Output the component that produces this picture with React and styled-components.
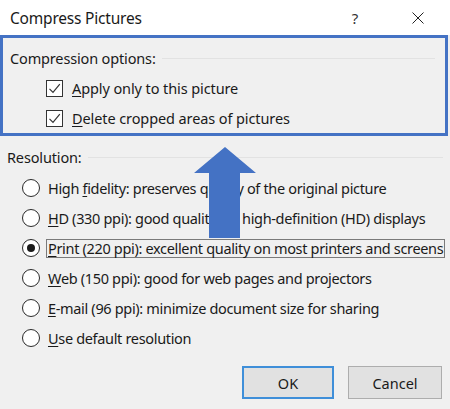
import React from 'react';
import styled, { createGlobalStyle } from 'styled-components';

const Global = createGlobalStyle`
  html, body { margin: 0; padding: 0; background: #f0f0f0; }
  body { font-family: "Noto Sans", "Open Sans", sans-serif; color: #1a1a1a; }
`;

const Dialog = styled.div`
  position: relative;
  width: 450px;
  height: 409px;
  background: #f0f0f0;
  overflow: hidden;
`;

const TitleBar = styled.div`
  height: 35px;
  background: #fff;
  display: flex;
  align-items: center;
  padding-left: 10px;
  font-size: 15.5px;
  letter-spacing: -0.2px;
`;

const Title = styled.div`
  flex: 1;
`;

const Help = styled.div`
  width: 14px;
  margin-right: 50px;
  text-align: center;
  font-size: 15px;
  color: #333;
`;

const Close = styled.svg`
  margin-right: 26px;
`;

const Frame = styled.div`
  width: 448px;
  height: 101px;
  box-sizing: border-box;
  border: 3px solid #4472c4;
  background: #f0f0f0;
  padding-top: 9px;
`;

const SectionHead = styled.div`
  display: flex;
  align-items: center;
  gap: 6px;
  padding-left: 7px;
  padding-right: ${p => p.$right}px;
  font-size: 14.5px;
  letter-spacing: -0.15px;
  height: 22px;
  &::after {
    content: '';
    flex: 1;
    height: 1px;
    background: #e2e2e2;
  }
`;

const CheckList = styled.div`
  margin-top: 4px;
`;

const CheckRow = styled.label`
  display: flex;
  align-items: center;
  gap: 9px;
  padding-left: 43px;
  height: 30px;
  font-size: 14.5px;
  letter-spacing: -0.1px;
`;

const Box = styled.span`
  flex-shrink: 0;
  width: 15px;
  height: 15px;
  border: 1px solid #333;
  background: #fff;
  display: flex;
  align-items: center;
  justify-content: center;
`;

const Resolution = styled.div`
  padding-top: 10px;
`;

const RadioList = styled.div`
  display: flex;
  flex-direction: column;
  margin-top: 5px;
`;

const RadioRow = styled.div`
  display: flex;
  align-items: center;
  height: 30px;
  padding-left: 22px;
  font-size: 14.5px;
  letter-spacing: -0.33px;
`;

const Circle = styled.span`
  flex-shrink: 0;
  width: 16px;
  height: 16px;
  border: 1px solid #2a2a2a;
  border-radius: 50%;
  background: #fff;
  display: flex;
  align-items: center;
  justify-content: center;
  margin-right: 6px;
  &::after {
    content: '';
    width: 8px;
    height: 8px;
    border-radius: 50%;
    background: ${p => (p.$on ? '#1a1a1a' : 'transparent')};
  }
`;

const RadioText = styled.span`
  padding: 0 1px;
  border: 1px solid ${p => (p.$focus ? '#7a7a7a' : 'transparent')};
  line-height: 17px;
  white-space: nowrap;
`;

const Key = styled.span`
  text-decoration: underline;
  text-underline-offset: 2px;
`;

const Footer = styled.div`
  display: flex;
  justify-content: flex-end;
  gap: 14px;
  padding-right: 8px;
  margin-top: 13px;
`;

const Button = styled.button`
  width: ${p => p.$w}px;
  height: 33px;
  background: #e1e1e1;
  border: ${p => (p.$primary ? '2px solid #3f8fd9' : '1px solid #adadad')};
  font-family: inherit;
  font-size: 14.5px;
  color: #1a1a1a;
  padding: 0;
`;

const Arrow = styled.svg`
  position: absolute;
  left: 193px;
  top: 146px;
`;

const Check = () => (
  <svg width="13" height="13" viewBox="0 0 13 13">
    <path d="M1.5 6.8 L5 10.3 L11.8 2.2" fill="none" stroke="#333" strokeWidth="1.2" />
  </svg>
);

const options = [
  { pre: 'High ', key: 'f', post: 'idelity: preserves quality of the original picture' },
  { pre: '', key: 'H', post: 'D (330 ppi): good quality for high-definition (HD) displays' },
  { pre: '', key: 'P', post: 'rint (220 ppi): excellent quality on most printers and screens', on: true },
  { pre: '', key: 'W', post: 'eb (150 ppi): good for web pages and projectors' },
  { pre: '', key: 'E', post: '-mail (96 ppi): minimize document size for sharing' },
  { pre: '', key: 'U', post: 'se default resolution' },
];

export default function App() {
  return (
    <Dialog>
      <Global />
      <TitleBar>
        <Title>Compress Pictures</Title>
        <Help>?</Help>
        <Close width="12" height="12" viewBox="0 0 12 12">
          <path d="M0.5 0.5 L11.5 11.5 M11.5 0.5 L0.5 11.5" stroke="#222" strokeWidth="1" />
        </Close>
      </TitleBar>

      <Frame>
        <SectionHead $right={10}>Compression options:</SectionHead>
        <CheckList>
          <CheckRow>
            <Box><Check /></Box>
            <span><Key>A</Key>pply only to this picture</span>
          </CheckRow>
          <CheckRow>
            <Box><Check /></Box>
            <span><Key>D</Key>elete cropped areas of pictures</span>
          </CheckRow>
        </CheckList>
      </Frame>

      <Resolution>
        <SectionHead $right={7}>Resolution:</SectionHead>
        <RadioList>
          {options.map((o, i) => (
            <RadioRow key={i}>
              <Circle $on={o.on} />
              <RadioText $focus={o.on}>
                {o.pre}<Key>{o.key}</Key>{o.post}
              </RadioText>
            </RadioRow>
          ))}
        </RadioList>
      </Resolution>

      <Footer>
        <Button $w={92} $primary>OK</Button>
        <Button $w={94}>Cancel</Button>
      </Footer>

      <Arrow width="64" height="93" viewBox="0 0 64 93">
        <polygon points="32,1 63,27 47,27 47,92 16,92 16,27 1,27" fill="#4472c4" />
      </Arrow>
    </Dialog>
  );
}
